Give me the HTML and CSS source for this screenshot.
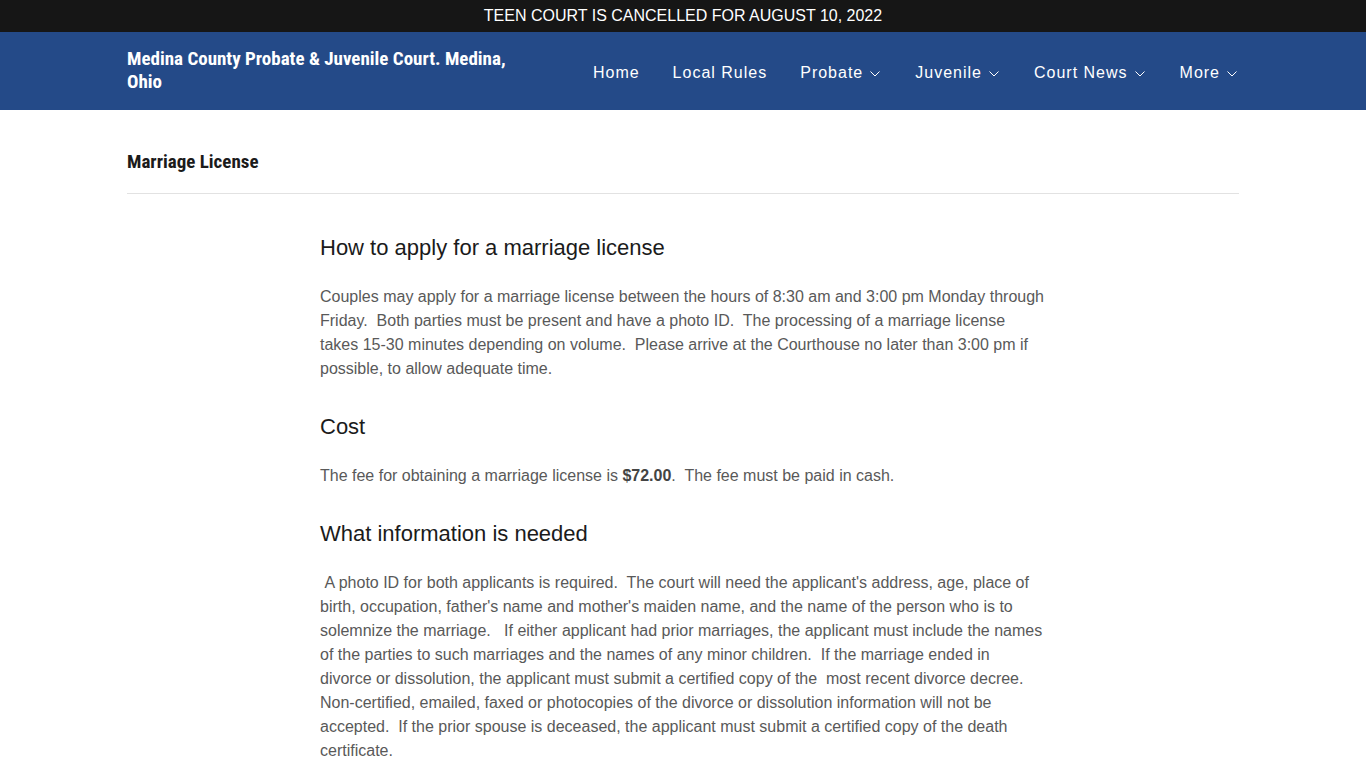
FILE: index.html
```html
<!DOCTYPE html>
<html lang="en">
<head>
  <meta charset="UTF-8"/>
  <meta name="viewport" content="width=device-width,initial-scale=1"/>
  <title>Marriage License - Medina County Probate &amp; Juvenile Court</title>
  <link rel="stylesheet" href="styles.css">
</head>
<body>
  <div class="announce">TEEN COURT IS CANCELLED FOR AUGUST 10, 2022</div>

  <header class="site-header">
    <div class="container header-inner">
      <a class="brand" href="#">Medina County Probate &amp; Juvenile Court. Medina, Ohio</a>
      <nav class="main-nav">
        <a href="#">Home</a>
        <a href="#">Local Rules</a>
        <a href="#" class="has-menu">Probate <svg class="caret" viewBox="0 0 10 6"><path d="M0.5 0.5l4.5 4.5 4.5-4.5"/></svg></a>
        <a href="#" class="has-menu">Juvenile <svg class="caret" viewBox="0 0 10 6"><path d="M0.5 0.5l4.5 4.5 4.5-4.5"/></svg></a>
        <a href="#" class="has-menu">Court News <svg class="caret" viewBox="0 0 10 6"><path d="M0.5 0.5l4.5 4.5 4.5-4.5"/></svg></a>
        <a href="#" class="has-menu">More <svg class="caret" viewBox="0 0 10 6"><path d="M0.5 0.5l4.5 4.5 4.5-4.5"/></svg></a>
      </nav>
    </div>
  </header>

  <main class="container">
    <h1 class="page-title">Marriage License</h1>

    <article class="content">
      <h2>How to apply for a marriage license</h2>
      <p>Couples may apply for a marriage license between the hours of 8:30 am and 3:00 pm Monday through Friday.&nbsp; Both parties must be present and have a photo ID.&nbsp; The processing of a marriage license takes 15-30 minutes depending on volume.&nbsp; Please arrive at the Courthouse no later than 3:00 pm if possible, to allow adequate time.</p>

      <h2>Cost</h2>
      <p>The fee for obtaining a marriage license is <strong>$72.00</strong>.&nbsp; The fee must be paid in cash.</p>

      <h2>What information is needed</h2>
      <p>&nbsp;A photo ID for both applicants is required.&nbsp; The court will need the applicant's address, age, place of<br>
        birth, occupation, father's name and mother's maiden name, and the name of the person who is to<br>
        solemnize the marriage.&nbsp; &nbsp;If either applicant had prior marriages, the applicant must include the names<br>
        of the parties to such marriages and the names of any minor children.&nbsp; If the marriage ended in<br>
        divorce or dissolution, the applicant must submit a certified copy of the&nbsp; most recent divorce decree.<br>
        Non-certified, emailed, faxed or photocopies of the divorce or dissolution information will not be<br>
        accepted.&nbsp; If the prior spouse is deceased, the applicant must submit a certified copy of the death<br>
        certificate.</p>
    </article>
  </main>
</body>
</html>
```

FILE: styles.css
```css
:root {
  --bar: #161616;
  --brand-blue: #244a88;
  --heading: #1b1b1b;
  --text: #595959;
  --rule: #e2e2e2;
}
*, *::before, *::after { margin:0; padding:0; box-sizing:border-box; }
body {
  font-family: "Liberation Sans", Arial, sans-serif;
  background: #fff;
  color: var(--text);
}
.container { max-width:1112px; margin:0 auto; }

/* Announcement strip */
.announce {
  background: var(--bar);
  color: #fff;
  text-align: center;
  font-size: 16px;
  line-height: 32px;
  height: 32px;
}

/* Header */
.site-header { background: var(--brand-blue); }
.header-inner {
  display: flex;
  align-items: center;
  justify-content: space-between;
  height: 78px;
}
.brand {
  color: #fff;
  text-decoration: none;
  font-family: "Roboto Condensed", "Liberation Sans Narrow", "DejaVu Sans Condensed", Roboto, sans-serif;
  font-weight: 700;
  font-size: 19px;
  line-height: 23px;
  width: 390px;
  margin-top: -3px;
}
.main-nav { display:flex; align-items:center; gap:33px; margin-top:3px; }
.main-nav a {
  color: #fff;
  text-decoration: none;
  font-size: 16px;
  letter-spacing: 1px;
  display: flex;
  align-items: center;
}
.caret {
  width: 10px;
  height: 6px;
  margin: 2px 2px 0 7px;
  fill: none;
  stroke: #fff;
  stroke-width: 1;
}

/* Page */
.page-title {
  font-family: "Roboto Condensed", "Liberation Sans Narrow", "DejaVu Sans Condensed", Roboto, sans-serif;
  font-weight: 700;
  font-size: 19px;
  line-height: 24px;
  color: var(--heading);
  padding: 40px 0 19px;
  border-bottom: 1px solid var(--rule);
}
.content {
  width: 726px;
  margin: 0 auto;
  padding: 40px 0 40px;
}
.content h2 {
  font-weight: 400;
  font-size: 22px;
  line-height: 27px;
  color: var(--heading);
  margin: 32px 0 24px;
}
.content h2:first-child { margin-top: 0; }
.content p {
  font-size: 16px;
  line-height: 24px;
}
.content strong { color: #444; }
```
